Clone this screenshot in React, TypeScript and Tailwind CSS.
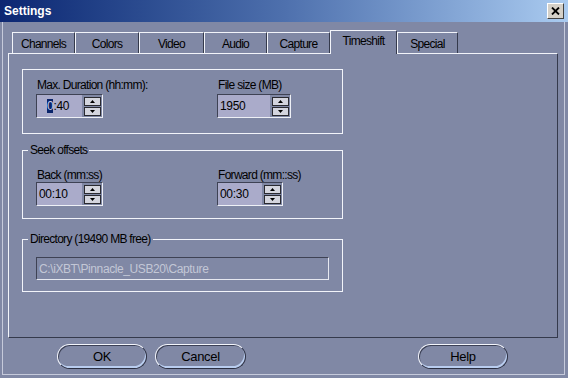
import React from "react";

const tabs: [string, string][] = [
  ["Channels", "w-[63px]"],
  ["Colors", "w-[64px]"],
  ["Video", "w-[65px]"],
  ["Audio", "w-[63px]"],
  ["Capture", "w-[63px]"],
  ["Timeshift", "w-[67px]"],
  ["Special", "w-[61px]"],
];

const Arrow = ({ up }: { up: boolean }) => (
  <svg width="5" height="3" viewBox="0 0 5 3">
    <path d={up ? "M2.5 0L5 3H0z" : "M0 0h5L2.5 3z"} fill="#000" />
  </svg>
);

const Spinner = ({
  width,
  children,
}: {
  width: string;
  children: React.ReactNode;
}) => {
  return (
    <div
      className={`flex h-[24px] ${width} border border-t-[#3e4254] border-l-[#3e4254] border-r-[#eef0f6] border-b-[#eef0f6]`}
    >
      <div className="flex-1 flex items-center bg-[#aaabca] text-[12px] tracking-[-0.3px]">
        {children}
      </div>
      <div className="w-[20px] flex flex-col items-center justify-center gap-px">
        <div className="w-[17px] h-[9px] bg-[#d4d5de] border border-[#2a2a30] flex items-center justify-center">
          <Arrow up />
        </div>
        <div className="w-[17px] h-[9px] bg-[#d4d5de] border border-[#2a2a30] flex items-center justify-center">
          <Arrow up={false} />
        </div>
      </div>
    </div>
  );
};

const Label = ({ children }: { children: React.ReactNode }) => (
  <div className="h-[13px] leading-[13px] pl-px">{children}</div>
);

const PillButton = ({
  width,
  children,
}: {
  width: string;
  children: React.ReactNode;
}) => (
  <button
    className={`${width} h-[25px] rounded-full border border-t-[#f4f6fc] border-l-[#f4f6fc] border-r-[#2c3042] border-b-[#2c3042] shadow-[inset_-1px_-2px_0_#b9cdef,inset_1px_1px_0_#3c4156] text-[13px] tracking-[-0.3px] flex items-center justify-center`}
  >
    {children}
  </button>
);

export default function App() {
  return (
    <div className="w-[568px] h-[378px] bg-[#8088a5] overflow-hidden text-black text-[12px] tracking-[-0.7px] font-['Liberation_Sans',Arial,sans-serif]">
      {/* title bar */}
      <div className="h-[22px] flex items-center justify-between pl-[4px] pr-[4px] bg-gradient-to-r from-[#0c2672] via-[#4e70ad] to-[#aacbf0]">
        <span className="text-white font-bold text-[12px] tracking-normal">
          Settings
        </span>
        <div className="w-[17px] h-[16px] bg-[#d4d0c8] border border-t-white border-l-white border-r-[#404040] border-b-[#404040] flex items-center justify-center">
          <svg width="9" height="8" viewBox="0 0 9 8">
            <path
              d="M1 0.5l7 7M8 0.5l-7 7"
              stroke="#000"
              strokeWidth="1.8"
            />
          </svg>
        </div>
      </div>

      <div className="ml-[2px] w-[563px] h-[353px] border-x border-b border-[#c6cadb]">
        <div className="pl-[5px] pt-[8px]">
          {/* tabs */}
          <div className="flex items-end h-[23px] pl-[4px]">
            {tabs.map(([name, w]) => {
              const active = name === "Timeshift";
              return (
                <div
                  key={name}
                  className={`${w} flex items-center justify-center border-t border-l border-r border-t-[#f2f4fa] border-l-[#f2f4fa] border-r-[#353a4c] ${
                    active
                      ? "h-[24px] -mb-px relative z-10 bg-[#8088a5] pb-[3px]"
                      : "h-[21px] pt-px"
                  }`}
                >
                  {name}
                </div>
              );
            })}
          </div>

          {/* panel */}
          <div className="w-[550px] h-[285px] border border-t-[#f2f4fa] border-l-[#f2f4fa] border-r-[#353a4c] border-b-[#353a4c] pl-[13px] pt-[15px]">
            <div className="w-[321px] h-[65px] border border-[#f2f4fa] pl-[13px] pt-[9px] flex">
              <div className="w-[181px]">
                <Label>Max. Duration (hh:mm):</Label>
                <div className="mt-[2px]">
                  <Spinner width="w-[67px]">
                    <span className="pl-[10px]">
                      <span className="bg-[#0a246a] text-[#c6cae8]">0</span>
                      :40
                    </span>
                  </Spinner>
                </div>
              </div>
              <div>
                <Label>File size (MB)</Label>
                <div className="mt-[2px]">
                  <Spinner width="w-[74px]">
                    <span className="pl-[2px]">1950</span>
                  </Spinner>
                </div>
              </div>
            </div>

            <fieldset className="mt-[10px] w-[321px] h-[75px] border border-[#f2f4fa] pl-[13px] pt-[12px]">
              <legend className="-ml-[8px] px-[2px] leading-[13px]">
                Seek offsets
              </legend>
              <div className="flex">
                <div className="w-[181px]">
                  <Label>Back (mm:ss)</Label>
                  <Spinner width="w-[67px]">
                    <span className="pl-[2px]">00:10</span>
                  </Spinner>
                </div>
                <div>
                  <Label>Forward (mm::ss)</Label>
                  <Spinner width="w-[66px]">
                    <span className="pl-[2px]">00:30</span>
                  </Spinner>
                </div>
              </div>
            </fieldset>

            <fieldset className="mt-[14px] w-[321px] h-[59px] border border-[#f2f4fa] pl-[13px] pt-[11px]">
              <legend className="-ml-[8px] px-[2px] leading-[13px]">
                Directory (19490 MB free)
              </legend>
              <div className="w-[293px] h-[23px] border border-t-[#3e4254] border-l-[#3e4254] border-r-[#e6e8f0] border-b-[#e6e8f0] flex items-center pl-[2px] text-[#c3c7d6] tracking-[-0.4px]">
                C:\iXBT\Pinnacle_USB20\Capture
              </div>
            </fieldset>
          </div>

          {/* buttons */}
          <div className="flex mt-[6px] pl-[49px]">
            <PillButton width="w-[90px]">OK</PillButton>
            <div className="ml-[8px]">
              <PillButton width="w-[91px]">Cancel</PillButton>
            </div>
            <div className="ml-[172px]">
              <PillButton width="w-[90px]">Help</PillButton>
            </div>
          </div>
        </div>
      </div>
    </div>
  );
}
